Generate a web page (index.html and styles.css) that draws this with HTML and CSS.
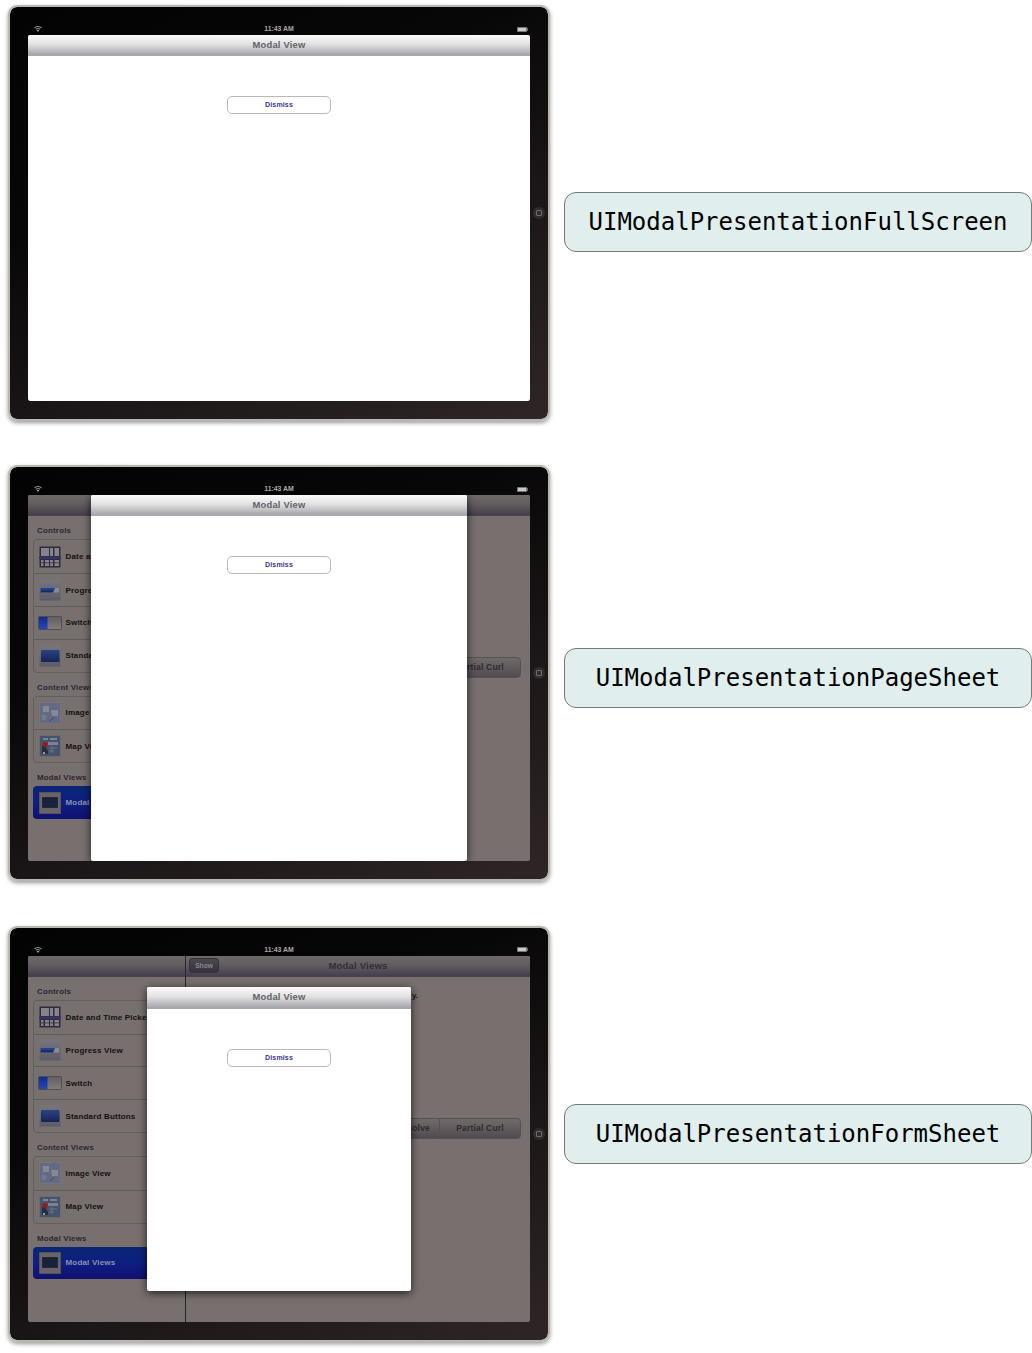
FILE: index.html
```html
<!DOCTYPE html>
<html lang="en">
<head>
<meta charset="utf-8">
<title>Modal presentation styles</title>
<link rel="stylesheet" href="styles.css">
</head>
<body>
<svg width="0" height="0" class="defs"><defs>
  <linearGradient id="tile" x2="0" y2="1"><stop stop-color="#77757c"/><stop offset="1" stop-color="#5c5b69"/></linearGradient>
  <linearGradient id="navy" x2="0" y2="1"><stop stop-color="#2c4381"/><stop offset="1" stop-color="#142554"/></linearGradient>
  <linearGradient id="knob" x2="0" y2="1"><stop stop-color="#625d60"/><stop offset="1" stop-color="#847d7d"/></linearGradient>
  <linearGradient id="blue" x2="0" y2="1"><stop stop-color="#0f2c92"/><stop offset="1" stop-color="#2547b4"/></linearGradient>
</defs></svg>
<main class="figure">
  <section class="devices" id="devices"></section>
  <section class="labels">
    <div class="label">UIModalPresentationFullScreen</div>
    <div class="label">UIModalPresentationPageSheet</div>
    <div class="label">UIModalPresentationFormSheet</div>
  </section>
</main>

<template id="device">
  <article class="device">
    <header class="status">
      <svg class="wifi" viewBox="0 0 8 6"><path d="M.5 2Q4-.9 7.5 2M1.9 3.4Q4 1.7 6.1 3.4" fill="none" stroke="#8b8b8b" stroke-width="1.1"/><path d="M2.6 4.1h2.8L4 5.9z" fill="#aaa"/></svg>
      <span class="time">11:43 AM</span>
      <svg class="battery" viewBox="0 0 11 5"><path d="M.5.5h9v4h-9zM9.5 1.6h1v1.8h-1z" fill="#c9c9c5" stroke="#777" stroke-width=".9"/></svg>
    </header>
    <div class="screen">
      <div class="app">
        <aside class="sidebar">
          <div class="bar"></div>
          <h3>Controls</h3>
          <ul>
            <li><svg viewBox="0 0 22 22"><path d="M.5.5h21v21H.5z" fill="#302b3c"/><path d="M2 2h8v8H2zM11 2h3v8h-3zM15.5 2H20v8h-4.500zM2 14h2.500v6H2zM6 14h4v6H6zM11 14h3v6h-3zM15.500 14H20v6h-4.500z" fill="#87838c"/><path d="M2 16.500h18v.8H2z" fill="#302b3c"/><path d="M0 10.500h22v2.500H0z" fill="#343566"/></svg><span>Date and Time Picker</span></li>
            <li><svg viewBox="0 0 22 22"><path d="M.5.5h21v21H.5z" fill="url(#tile)"/><rect x="1.500" y="9" width="18.500" height="4.500" rx="1" fill="#8b8a94"/><path d="M1.500 9H16l-2 4.500H1.500z" fill="url(#navy)"/><path d="M2 9h13v2H2z" fill="#1b41a3"/></svg><span>Progress View</span></li>
            <li><svg class="wide" viewBox="0 0 24 22"><rect x=".5" y="4.500" width="23" height="13" rx="1" fill="url(#knob)" stroke="#514c50"/><path d="M1 5h8.500v12H1z" fill="url(#blue)"/></svg><span>Switch</span></li>
            <li><svg viewBox="0 0 22 22"><path d="M.5.5h21v21H.5z" fill="url(#tile)"/><rect x="2" y="5" width="18.500" height="12" rx="1" fill="url(#navy)"/></svg><span>Standard Buttons</span></li>
          </ul>
          <h3>Content Views</h3>
          <ul>
            <li><svg viewBox="0 0 22 22"><path d="M.5.5h21v21H.5z" fill="#626b82" stroke="#77747a"/><path d="M4 4h6v6H4zM12 8h7v6h-6z" fill="#858997"/><path d="M3 12l5 2-2 4H3z" fill="#717a92"/><path d="M10 19l4-2 1-2" fill="none" stroke="#46506f"/></svg><span>Image View</span></li>
            <li><svg viewBox="0 0 22 22"><path d="M.5.5h21v21H.5z" fill="#46536b" stroke="#6d6b72"/><path d="M4 3h5v2H4zM11 3h7v2h-7zM9 7h10v3H9z" fill="#7b8493"/><path d="M10 13h8M13 11v7M10 16h5" stroke="#68758b"/><path d="M3 11h3l3 5v3H3z" fill="#242e3c"/><path d="M4 17h2v2H4z" fill="#999"/><circle cx="6" cy="9.500" r="2.600" fill="#9d1718"/></svg><span>Map View</span></li>
          </ul>
          <h3>Modal Views</h3>
          <ul class="selected">
            <li><svg viewBox="0 0 22 22"><path d="M.5.5h21v21H.5z" fill="#67636a" stroke="#57535b"/><path d="M3.500 5.500h15v10h-15z" fill="#17233d" stroke="#2b272d"/></svg><span>Modal Views</span></li>
          </ul>
        </aside>
        <section class="detail">
          <div class="bar"><span class="back">Show</span><span class="title">Modal Views</span></div>
          <p class="note">y.</p>
          <div class="segments"><span>Dissolve</span><span>Partial Curl</span></div>
        </section>
      </div>
      <div class="modal">
        <div class="modal-bar">Modal View</div>
        <button class="dismiss">Dismiss</button>
      </div>
    </div>
    <div class="home"><i></i></div>
  </article>
</template>
<script src="script.js"></script>
</body>
</html>
```
FILE: styles.css
```css
* { box-sizing: border-box; }
body { margin: 0; background: #fff; font-family: "Liberation Sans", Arial, sans-serif; }
.defs { display: block; }
.figure { display: flex; width: 1032px; height: 1353px; overflow: hidden; }

.devices { width: 564px; padding: 5px 0 0 8px; display: flex; flex-direction: column; gap: 44.4px; }
.device {
  width: 542px; height: 416px; flex: none;
  display: grid; grid-template: 28px 366px 18px / 18px 502px 18px;
  border: 2px solid #b9b7ae; border-radius: 9px;
  background: linear-gradient(155deg, #030303 0%, #080707 35%, #1b1617 65%, #2e2526 100%) padding-box;
  box-shadow: 0 2px 4px rgba(0,0,0,.4);
}
.status {
  grid-column: 2; grid-row: 1; align-self: end; height: 12px; padding: 0 2px 0 6px;
  display: grid; grid-template-columns: 1fr auto 1fr; align-items: center; color: #aaa;
}
.wifi { width: 8px; height: 6px; }
.time { margin-right: 4px; font-size: 6.9px; font-weight: bold; line-height: 12px; }
.battery { width: 11px; height: 5px; justify-self: end; }
.home { grid-column: 3; grid-row: 1 / 4; place-self: center; width: 12px; height: 12px; border-radius: 6px; background: #302b2c; display: grid; place-items: center; }
.home i { width: 6px; height: 6px; border: 1px solid #716c6c; border-radius: 1px; }

.screen { grid-column: 2; grid-row: 2; position: relative; overflow: hidden; border-radius: 2px; background: #78706e; }
.app { display: flex; height: 366px; }
.sidebar { width: 158px; border-right: 1px solid #292429; }
.bar { height: 21px; background: linear-gradient(#6f6968, #625c5f 45%, #443f4d); border-bottom: 1px solid #49434c; }
.sidebar h3 { margin: 0; padding: 9px 0 0 9px; height: 23px; font-size: 7.9px; line-height: 11px; letter-spacing: .22px; color: #292735; }
.sidebar ul { list-style: none; margin: 0 4px 0 5px; padding: 0; border: 1px solid #655e5e; border-radius: 4px; overflow: hidden; }
.sidebar li { height: 32.8px; display: flex; align-items: center; gap: 4.5px; padding-left: 5px; font-size: 8px; font-weight: bold; letter-spacing: .18px; white-space: nowrap; color: #111; }
.sidebar li + li { border-top: 1px solid #625b5b; }
.sidebar li svg { width: 22px; height: 22px; flex: none; }
.sidebar li svg.wide { width: 24px; margin: 0 -1px; }
.sidebar .selected { border: 0; background: linear-gradient(#0b2674, #0c1f83 50%, #11106f); }
.sidebar .selected li { padding-left: 6px; color: #8e91ac; }

.detail { flex: 1; }
.detail .bar { display: grid; grid-template-columns: 30px 1fr 30px; align-items: center; padding: 0 3px; }
.back { height: 15px; border: 1px solid #35313a; border-radius: 3px; background: linear-gradient(#4c4750, #36323f); color: #8b8790; font-size: 6.6px; font-weight: bold; line-height: 13px; text-align: center; }
.title { text-align: center; font-size: 9.5px; font-weight: bold; letter-spacing: .2px; color: #322f36; }
.note { margin: 13px 0 0 226px; height: 12px; font-size: 8px; font-weight: bold; line-height: 12px; color: #1b191b; }
.segments { margin: 116px 9px 0 160px; height: 21px; display: grid; grid-template-columns: 1fr 80px; border: 1px solid #575154; border-radius: 4px; background: linear-gradient(#716a69, #514b51); color: #2d2a30; font-size: 8.5px; font-weight: bold; line-height: 19px; letter-spacing: .2px; }
.segments span { text-align: center; }
.segments span:first-child { text-align: right; padding-right: 9px; border-right: 1px solid #575154; }

.modal { position: absolute; background: #fff; border-radius: 2px; display: flex; flex-direction: column; align-items: center; overflow: hidden; box-shadow: 0 2px 8px rgba(0,0,0,.75); }
.modal-bar { align-self: stretch; height: 21px; border-bottom: 1px solid #aaa8ae; background: linear-gradient(#fbfbfb, #e2e2e4 45%, #a6a4aa); color: #636369; font-size: 9.4px; line-height: 20px; font-weight: bold; text-align: center; letter-spacing: .2px; }
.dismiss { margin: 40px 0 0; width: 104px; height: 18px; padding: 0; border: 1px solid #b9b9b7; border-radius: 5px; background: #fff; color: #38388a; font: bold 7px/16px "Liberation Sans", Arial, sans-serif; letter-spacing: .15px; }
.full .modal { inset: 0; }
.page .modal { inset: 0 63px 0 63px; }
.form .modal { left: 119px; top: 31px; width: 264px; height: 304px; }
.form .modal-bar { height: 22px; }

.labels { width: 468px; padding-top: 192px; display: flex; flex-direction: column; gap: 396px; }
.label { height: 60px; flex: none; border: 1.5px solid #777a7b; border-radius: 12px; background: #e0eeee; color: #000; font: 24px/59px "DejaVu Sans Mono", monospace; text-align: center; white-space: nowrap; }
```
FILE: script.js
```js
const template = document.getElementById("device");
const list = document.getElementById("devices");
for (const style of ["full", "page", "form"]) {
  const device = template.content.cloneNode(true);
  device.querySelector(".device").classList.add(style);
  list.append(device);
}
```
